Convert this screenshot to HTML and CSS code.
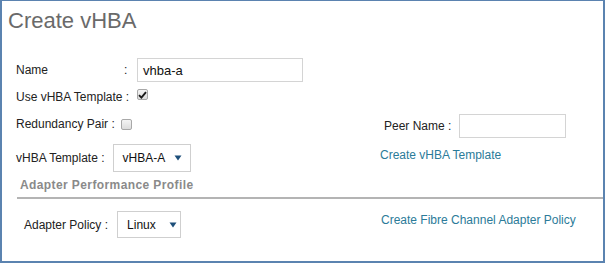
FILE: index.html
```html
<!DOCTYPE html>
<html>
<head>
<meta charset="utf-8">
<link rel="stylesheet" href="styles.css">
</head>
<body>
<div class="frame">
  <h1 class="title">Create vHBA</h1>
  <div class="form">
    <div class="row row-name">
      <span class="label label-name">Name</span>
      <span class="colon">:</span>
      <span class="input input-name">vhba-a</span>
    </div>
    <div class="row row-tpl">
      <span class="label label-use">Use vHBA Template :</span>
      <span class="check checked"><svg width="9" height="8" viewBox="0 0 9 8"><path d="M1 4.2 L3.4 6.6 L8 1.2" fill="none" stroke="#1a1a1a" stroke-width="1.9"/></svg></span>
    </div>
    <div class="row row-red">
      <div class="left">
        <span class="label">Redundancy Pair :</span>
        <span class="check"></span>
      </div>
      <div class="right right-peer">
        <span class="label">Peer Name :</span>
        <span class="input input-peer"></span>
      </div>
    </div>
    <div class="row row-vtpl">
      <div class="left">
        <span class="label">vHBA Template :</span>
        <span class="select select-vhba">vHBA-A<svg class="arrow" width="8" height="6" viewBox="0 0 8 6"><path d="M0.5 0.5 H7.5 L4 5.5 Z" fill="#1d4f7a"/></svg></span>
      </div>
      <div class="right right-link">
        <a class="link">Create vHBA Template</a>
      </div>
    </div>
    <div class="section">Adapter Performance Profile</div>
    <div class="divider"></div>
    <div class="row row-pol">
      <div class="left left-pol">
        <span class="label">Adapter Policy :</span>
        <span class="select select-linux">Linux<svg class="arrow" width="8" height="6" viewBox="0 0 8 6"><path d="M0.5 0.5 H7.5 L4 5.5 Z" fill="#1d4f7a"/></svg></span>
      </div>
      <div class="right right-link2">
        <a class="link">Create Fibre Channel Adapter Policy</a>
      </div>
    </div>
  </div>
</div>
</body>
</html>
```

FILE: styles.css
```css
html, body {
  margin: 0;
  padding: 0;
  background: #ffffff;
}
.frame {
  box-sizing: border-box;
  width: 605px;
  height: 263px;
  border: 2px solid #5b83b0;
  border-top-width: 1px;
  background: #ffffff;
  font-family: "Liberation Sans", Arial, sans-serif;
  font-size: 12px;
  color: #222222;
}
.title {
  margin: 7px 0 0 6px;
  font-size: 22px;
  line-height: 26px;
  font-weight: normal;
  color: #6a6a6a;
}
.form {
  display: flex;
  flex-direction: column;
  padding-left: 14px;
  margin-top: 24px;
}
.row {
  display: flex;
  align-items: center;
}
.label {
  white-space: nowrap;
}
.row-name {
  height: 24px;
}
.label-name {
  width: 108px;
}
.colon {
  width: 13px;
}
.input {
  box-sizing: border-box;
  display: inline-flex;
  align-items: center;
  border: 1px solid #d4d4d4;
  background: #fff;
  font-size: 13px;
  color: #111;
}
.input-name {
  width: 166px;
  height: 24px;
  padding-left: 5px;
}
.row-tpl {
  height: 26px;
  margin-top: 2px;
}
.label-use {
  width: 121px;
}
.check {
  box-sizing: border-box;
  display: inline-flex;
  align-items: center;
  justify-content: center;
  width: 11px;
  height: 11px;
  border: 1px solid #a8a8a8;
  border-radius: 2px;
  background: linear-gradient(#f4f4f4, #dcdcdc);
}
.row-tpl .check {
  margin-top: -5px;
}
.row-red {
  height: 28px;
  margin-top: 2px;
}
.left {
  display: flex;
  align-items: center;
  width: 364px;
}
.row-red .left .check {
  margin-left: 6px;
  margin-top: -4px;
}
.row-red .left .label {
  margin-top: -4px;
}
.right {
  display: flex;
  align-items: center;
}
.right-peer {
  padding-left: 4px;
}
.input-peer {
  width: 107px;
  height: 24px;
  margin-left: 8px;
}
.row-vtpl {
  height: 28px;
  margin-top: 4px;
}
.select {
  box-sizing: border-box;
  display: inline-flex;
  align-items: center;
  border: 1px solid #cfcfcf;
  background: #fff;
  font-size: 12px;
  color: #111;
  height: 28px;
  padding-left: 9px;
}
.select-vhba {
  width: 78px;
  margin-left: 8px;
}
.select-vhba .arrow {
  margin-left: 9px;
}
.select-linux {
  width: 64px;
  height: 27px;
  margin-left: 9px;
}
.select-linux .arrow {
  margin-left: 13px;
}
.right-link {
  margin-top: -6px;
}
.link {
  color: #2b7b99;
  text-decoration: none;
}
.section {
  margin-top: 6px;
  margin-left: 4px;
  font-weight: bold;
  color: #8a8a8a;
  line-height: 14px;
  letter-spacing: 0.4px;
}
.divider {
  margin-top: 5px;
  margin-left: 1px;
  height: 2px;
  background: #b4b4b4;
}
.row-pol {
  height: 27px;
  margin-top: 12px;
}
.left-pol {
  padding-left: 8px;
  width: 357px;
}
.right-link2 {
  margin-top: -9px;
}
```
